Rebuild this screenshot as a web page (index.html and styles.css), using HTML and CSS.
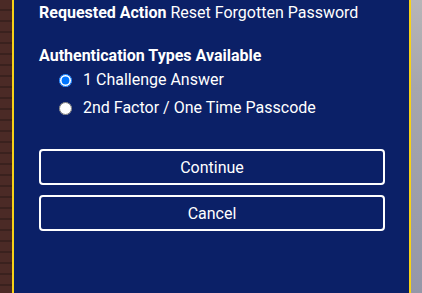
FILE: index.html
```html
<!DOCTYPE html>
<html>
<head>
<meta charset="utf-8">
<link rel="stylesheet" href="styles.css">
</head>
<body>
<div class="page">
  <div class="bg-left"></div>
  <div class="panel">
    <div class="line"><span class="label">Requested Action</span> Reset Forgotten Password</div>
    <div class="section-title">Authentication Types Available</div>
    <div class="options">
      <label class="option"><input type="radio" name="auth" checked><span>1 Challenge Answer</span></label>
      <label class="option"><input type="radio" name="auth"><span>2nd Factor / One Time Passcode</span></label>
    </div>
    <div class="buttons">
      <button class="btn">Continue</button>
      <button class="btn">Cancel</button>
    </div>
  </div>
  <div class="bg-right"></div>
</div>
</body>
</html>
```
FILE: styles.css
```css
html, body {
  margin: 0;
  padding: 0;
  width: 422px;
  height: 293px;
  overflow: hidden;
}
body {
  font-family: Roboto, "Liberation Sans", sans-serif;
  color: #fff;
}
.page {
  display: flex;
  height: 293px;
}
.bg-left {
  width: 12px;
  background: repeating-linear-gradient(180deg, #4b2a26 0px, #4b2a26 9px, #3a211e 9px, #3a211e 11px), #4b2a26;
}
.bg-right {
  flex: 1;
  background: linear-gradient(180deg, #b7b5b8 0%, #a7a6ad 30%, #9597a8 100%);
}
.panel {
  width: 370px;
  height: 291px;
  background: #0b2067;
  border-left: 2px solid #f7d217;
  border-right: 2px solid #f7d217;
  border-bottom: 2px solid #f7d217;
  padding: 3px 0 0 25px;
  font-size: 16px;
  line-height: 20px;
}
.label, .section-title {
  font-weight: 700;
}
.section-title {
  margin-top: 23px;
}
.options {
  display: flex;
  flex-direction: column;
  gap: 8px;
  margin-top: 4px;
}
.option {
  display: flex;
  align-items: center;
  height: 20px;
  padding-left: 20px;
}
.option input {
  width: 13px;
  height: 13px;
  margin: 0 11px 0 0;
}
.buttons {
  display: flex;
  flex-direction: column;
  gap: 10px;
  margin-top: 31px;
  width: 346px;
}
.btn {
  height: 36px;
  background: transparent;
  border: 2px solid #fff;
  border-radius: 4px;
  color: #fff;
  font-family: Roboto, "Liberation Sans", sans-serif;
  font-size: 16px;
  font-weight: 400;
  padding: 0;
}
```
